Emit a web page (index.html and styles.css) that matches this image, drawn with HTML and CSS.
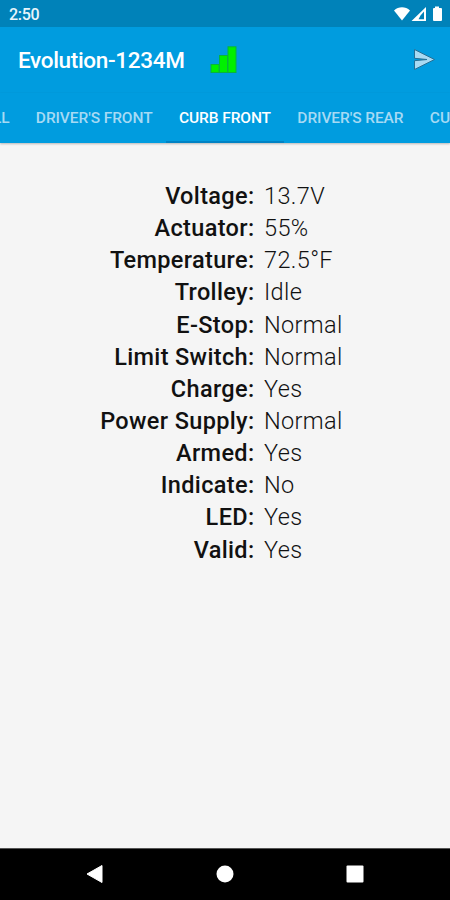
FILE: index.html
```
<!DOCTYPE html>
<html lang="en">
<head>
    <meta charset="UTF-8">
    <meta name="viewport" content="width=device-width, initial-scale=1.0">
    <title>Evolution-1234M</title>
    <link rel="stylesheet" href="styles.css">
</head>
<body>
    <div class="status-bar">
        <span class="clock">2:50</span>
        <svg class="status-icons" width="50" height="18" viewBox="0 0 50 18" fill="#fff">
            <path d="M0 4.5C4.500 .2 11.500 .2 16 4.500L8 14.500z"/>
            <path fill-rule="evenodd" d="M17.500 15L32 1v14zM24.500 13.300h5.500V5.500l-3.500 4z"/>
            <path d="M41 0.500h4v1.500h2q1 0 1 1V14q0 1-1 1h-7q-1 0-1-1V3q0-1 1-1h1z"/>
        </svg>
    </div>

    <header class="app-bar">
        <h1>Evolution-1234M</h1>
        <svg class="signal" width="28" height="28" viewBox="0 0 28 28">
            <g fill="#00f000" stroke="#08b43c" stroke-width="1">
                <rect x="1" y="18.500" width="8" height="8"/>
                <rect x="9.500" y="9.500" width="8" height="17"/>
                <rect x="18" y="0.800" width="8" height="25.700"/>
            </g>
        </svg>
        <svg class="send" width="24" height="24" viewBox="0 0 24 24">
            <path d="M1.500 1.500L21.500 11.500L1.500 21.500V12.700L14 11.500L1.500 10.300z" fill="#a9daf3" stroke="#276f94" stroke-width="1"/>
        </svg>
    </header>

    <nav class="tabs">
        <a class="tab">ALL</a>
        <a class="tab">DRIVER'S FRONT</a>
        <a class="tab active">CURB FRONT</a>
        <a class="tab">DRIVER'S REAR</a>
        <a class="tab">CURB REAR</a>
    </nav>

    <main class="content">
        <dl class="readings">
            <dt>Voltage:</dt><dd>13.7V</dd>
            <dt>Actuator:</dt><dd>55%</dd>
            <dt>Temperature:</dt><dd>72.5°F</dd>
            <dt>Trolley:</dt><dd>Idle</dd>
            <dt>E-Stop:</dt><dd>Normal</dd>
            <dt>Limit Switch:</dt><dd>Normal</dd>
            <dt>Charge:</dt><dd>Yes</dd>
            <dt>Power Supply:</dt><dd>Normal</dd>
            <dt>Armed:</dt><dd>Yes</dd>
            <dt>Indicate:</dt><dd>No</dd>
            <dt>LED:</dt><dd>Yes</dd>
            <dt>Valid:</dt><dd>Yes</dd>
        </dl>
    </main>

    <footer class="nav-bar">
        <svg width="18" height="20" viewBox="0 0 18 20"><path d="M16 1.500v17L1 10z" fill="#fff" stroke="#fff" stroke-linejoin="round"/></svg>
        <svg width="18" height="18" viewBox="0 0 18 18"><circle cx="9" cy="9" r="8.500" fill="#fff"/></svg>
        <svg width="18" height="18" viewBox="0 0 18 18"><rect x=".5" y=".5" width="17" height="17" rx="1" fill="#fff"/></svg>
    </footer>
</body>
</html>
```
FILE: styles.css
```
* {
    margin: 0;
    padding: 0;
    box-sizing: border-box;
}

body {
    font-family: Roboto, "Liberation Sans", sans-serif;
    background: #f5f5f5;
    height: 900px;
    overflow: hidden;
    display: flex;
    flex-direction: column;
}

.status-bar {
    flex: none;
    height: 27px;
    background: #0082b9;
    color: #e8f5fb;
    display: flex;
    align-items: center;
    justify-content: space-between;
    padding: 0 7px 0 9px;
}

.status-icons {
    display: block;
    margin-top: 3px;
    margin-right: -1px;
}

.clock {
    font-size: 16px;
    font-weight: 500;
    letter-spacing: -0.3px;
    padding-top: 2px;
}

.app-bar {
    flex: none;
    height: 66px;
    background: #009cdf;
    display: flex;
    align-items: center;
    padding: 0 13px 0 18px;
}

.app-bar h1 {
    color: #fff;
    font-size: 22.5px;
    font-weight: 500;
    letter-spacing: -0.33px;
    white-space: nowrap;
    padding-bottom: 1px;
}

.signal {
    margin-left: 26px;
}

.send {
    margin-left: auto;
}

.tabs {
    flex: none;
    height: 50px;
    background: #009cdf;
    display: flex;
    overflow: hidden;
    box-shadow: 0 1px 2px rgba(0, 0, 0, 0.25);
}

.tab {
    flex: none;
    display: flex;
    align-items: center;
    padding: 2px 13.2px 0;
    font-size: 15.5px;
    font-weight: 500;
    letter-spacing: -0.08px;
    color: #a6daf4;
    white-space: nowrap;
    border-bottom: 2px solid transparent;
}

/* strip is scrolled part of the way past the first tab */
.tab:first-child {
    margin-left: -30.5px;
}

.tab.active {
    color: #fff;
    border-bottom-color: #0082c4;
}

.content {
    flex: 1;
    padding-top: 37px;
}

.readings {
    display: grid;
    grid-template-columns: 254.5px 1fr;
    column-gap: 9.5px;
    grid-auto-rows: 32.15px;
    font-size: 23.5px;
    line-height: 32px;
    letter-spacing: 0.35px;
    color: #111;
}

.readings dt {
    font-weight: 500;
    text-align: right;
}

.readings dd {
    font-weight: 300;
}

.nav-bar {
    flex: none;
    height: 52px;
    background: #000;
    border-top: 1px solid #555;
    display: flex;
    align-items: center;
    justify-content: space-between;
    padding: 0 86px 1px;
}
```
